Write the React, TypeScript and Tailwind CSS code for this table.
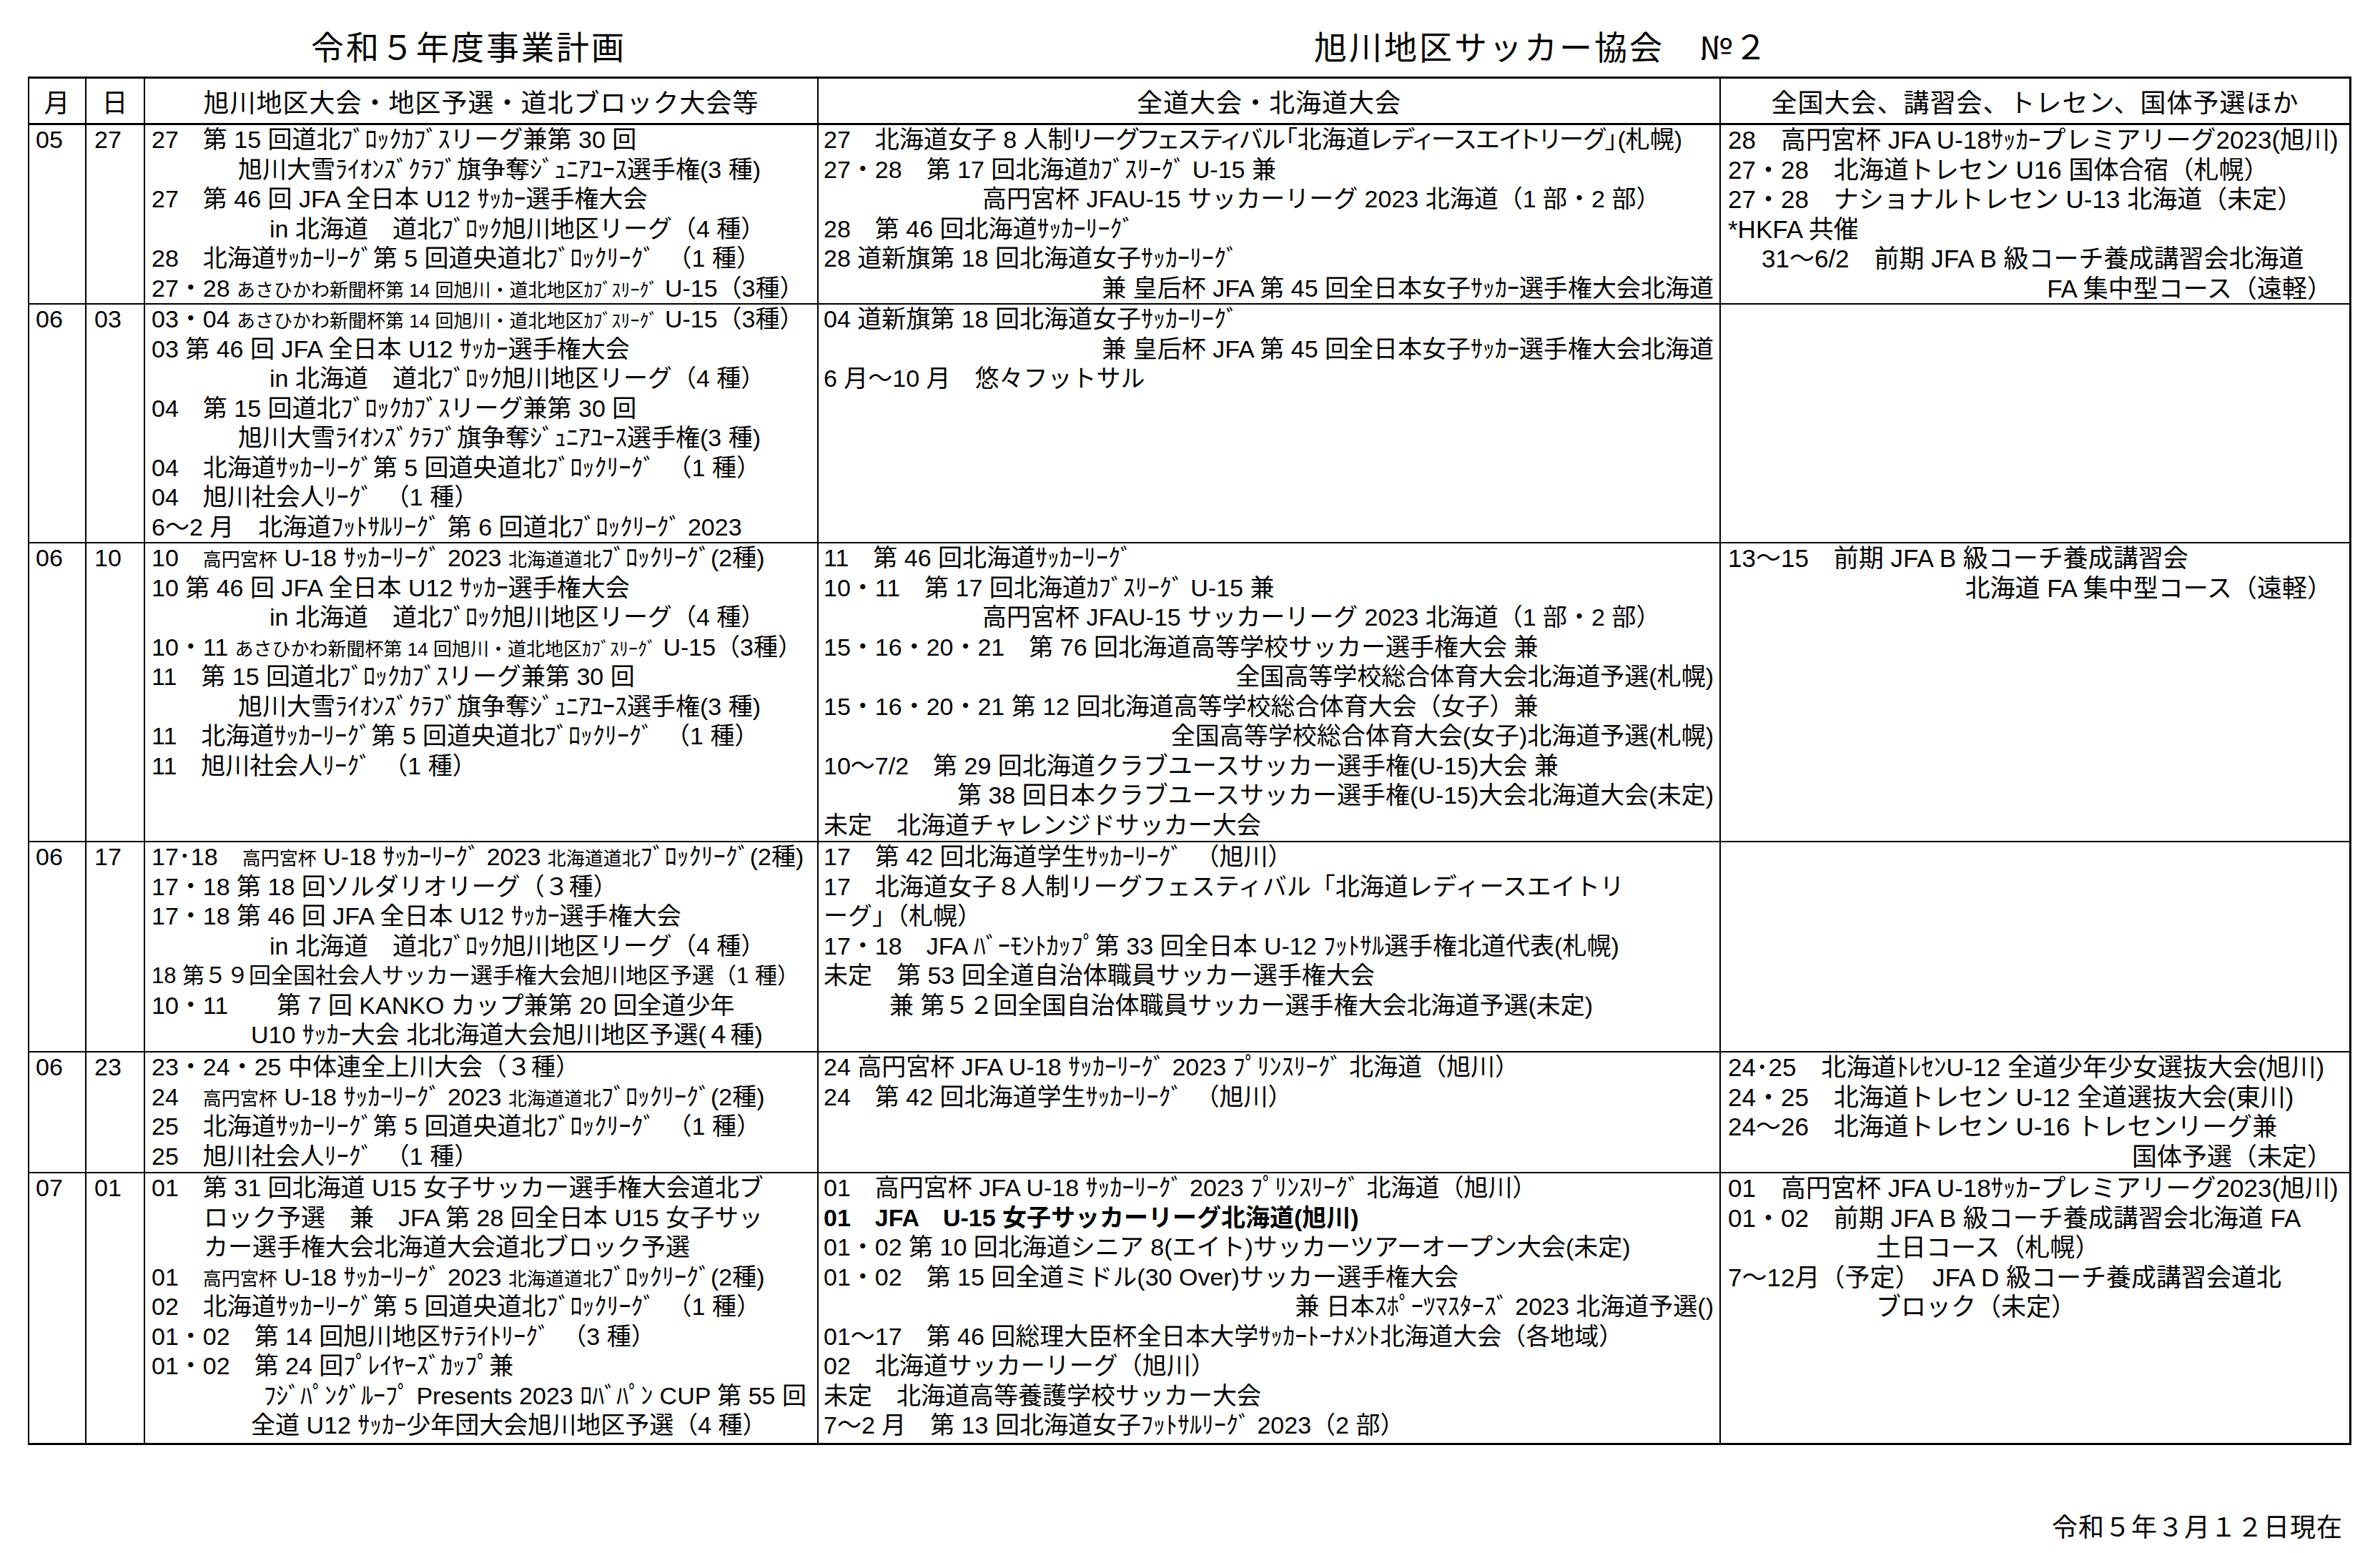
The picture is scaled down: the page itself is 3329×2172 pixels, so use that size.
import React from 'react';

type Ln = { t: React.ReactNode; c?: string };
type Row = { m: string; d: string; h: string; c1: Ln[]; c2: Ln[]; c3: Ln[] };

// Word-style gap between alphanumerics and Japanese text
const JA = '\u3040-\u30fa\u30fc-\u30ff\u4e00-\u9fff\uff66-\uff9f';
const jp = (s: string) =>
	s
		.replace(new RegExp(`([0-9A-Za-z])(?=[${JA}])`, 'g'), '$1 ')
		.replace(new RegExp(`([${JA}])(?=[0-9A-Za-z])`, 'g'), '$1 ');

// condensed pieces, as in the printed sheet
const S = ({ children }: { children: React.ReactNode }) => <span className="text-[26px]">{children}</span>;
const XS = ({ children }: { children: React.ReactNode }) => <span className="text-[26px]">{children}</span>;

const asahi = (day: string) => (
	<>
		{day} <XS>あさひかわ新聞杯第 14 回旭川・道北地区ｶﾌﾞｽﾘｰｸﾞ</XS> U-15（3種）
	</>
);
const takamado = (day: string) => (
	<>
		{day}
		<S>高円宮杯</S> U-18 ｻｯｶｰﾘｰｸﾞ 2023 <S>北海道道北</S>ﾌﾞﾛｯｸﾘｰｸﾞ(2種)
	</>
);

const rows: Row[] = [
	{
		m: '05',
		d: '27',
		h: 'h-[251px] border-b-2',
		c1: [
			{ t: '27　第15回道北ﾌﾞﾛｯｸｶﾌﾞｽリーグ兼第30回' },
			{ t: '旭川大雪ﾗｲｵﾝｽﾞｸﾗﾌﾞ旗争奪ｼﾞｭﾆｱﾕｰｽ選手権(3種)', c: 'pl-[121px]' },
			{ t: '27　第46回JFA全日本U12ｻｯｶｰ選手権大会' },
			{ t: 'in北海道　道北ﾌﾞﾛｯｸ旭川地区リーグ（4種）', c: 'pl-[165px]' },
			{ t: '28　北海道ｻｯｶｰﾘｰｸﾞ第5回道央道北ﾌﾞﾛｯｸﾘｰｸﾞ　（1種）' },
			{ t: asahi('27・28') },
		],
		c2: [
			{ t: '27　北海道女子8人制リーグフェスティバル「北海道レディースエイトリーグ」(札幌)', c: "[font-feature-settings:'palt']" },
			{ t: '27・28　第17回北海道ｶﾌﾞｽﾘｰｸﾞ U-15兼' },
			{ t: '高円宮杯JFAU-15サッカーリーグ2023北海道（1部・2部）', c: 'pl-[222px]' },
			{ t: '28　第46回北海道ｻｯｶｰﾘｰｸﾞ' },
			{ t: '28 道新旗第18回北海道女子ｻｯｶｰﾘｰｸﾞ' },
			{ t: '兼 皇后杯JFA第45回全日本女子ｻｯｶｰ選手権大会北海道', c: 'text-right' },
		],
		c3: [
			{ t: '28　高円宮杯 JFA U-18ｻｯｶｰプレミアリーグ2023(旭川)' },
			{ t: '27・28　北海道トレセン U16 国体合宿（札幌）' },
			{ t: '27・28　ナショナルトレセン U-13 北海道（未定）' },
			{ t: '*HKFA 共催' },
			{ t: '31～6/2　前期 JFA B 級コーチ養成講習会北海道', c: 'pl-[47px]' },
			{ t: 'FA 集中型コース（遠軽）', c: 'text-right' },
		],
	},
	{
		m: '06',
		d: '03',
		h: 'h-[334px] border-b-2',
		c1: [
			{ t: asahi('03・04') },
			{ t: '03 第46回JFA全日本U12ｻｯｶｰ選手権大会' },
			{ t: 'in北海道　道北ﾌﾞﾛｯｸ旭川地区リーグ（4種）', c: 'pl-[165px]' },
			{ t: '04　第15回道北ﾌﾞﾛｯｸｶﾌﾞｽリーグ兼第30回' },
			{ t: '旭川大雪ﾗｲｵﾝｽﾞｸﾗﾌﾞ旗争奪ｼﾞｭﾆｱﾕｰｽ選手権(3種)', c: 'pl-[121px]' },
			{ t: '04　北海道ｻｯｶｰﾘｰｸﾞ第5回道央道北ﾌﾞﾛｯｸﾘｰｸﾞ　（1種）' },
			{ t: '04　旭川社会人ﾘｰｸﾞ　（1種）' },
			{ t: '6～2月　北海道ﾌｯﾄｻﾙﾘｰｸﾞ 第6回道北ﾌﾞﾛｯｸﾘｰｸﾞ 2023' },
		],
		c2: [
			{ t: '04 道新旗第18回北海道女子ｻｯｶｰﾘｰｸﾞ' },
			{ t: '兼 皇后杯JFA第45回全日本女子ｻｯｶｰ選手権大会北海道', c: 'text-right' },
			{ t: '6月～10月　悠々フットサル' },
		],
		c3: [],
	},
	{
		m: '06',
		d: '10',
		h: 'h-[418px] border-b-2',
		c1: [
			{ t: takamado('10　') },
			{ t: '10 第46回JFA全日本U12ｻｯｶｰ選手権大会' },
			{ t: 'in北海道　道北ﾌﾞﾛｯｸ旭川地区リーグ（4種）', c: 'pl-[165px]' },
			{ t: asahi('10・11') },
			{ t: '11　第15回道北ﾌﾞﾛｯｸｶﾌﾞｽリーグ兼第30回' },
			{ t: '旭川大雪ﾗｲｵﾝｽﾞｸﾗﾌﾞ旗争奪ｼﾞｭﾆｱﾕｰｽ選手権(3種)', c: 'pl-[121px]' },
			{ t: '11　北海道ｻｯｶｰﾘｰｸﾞ第5回道央道北ﾌﾞﾛｯｸﾘｰｸﾞ　（1種）' },
			{ t: '11　旭川社会人ﾘｰｸﾞ　（1種）' },
		],
		c2: [
			{ t: '11　第46回北海道ｻｯｶｰﾘｰｸﾞ' },
			{ t: '10・11　第17回北海道ｶﾌﾞｽﾘｰｸﾞ U-15兼' },
			{ t: '高円宮杯JFAU-15サッカーリーグ2023北海道（1部・2部）', c: 'pl-[222px]' },
			{ t: '15・16・20・21　第76回北海道高等学校サッカー選手権大会 兼' },
			{ t: '全国高等学校総合体育大会北海道予選(札幌)', c: 'text-right' },
			{ t: '15・16・20・21 第12回北海道高等学校総合体育大会（女子）兼' },
			{ t: '全国高等学校総合体育大会(女子)北海道予選(札幌)', c: 'text-right' },
			{ t: '10～7/2　第29回北海道クラブユースサッカー選手権(U-15)大会 兼' },
			{ t: '第38回日本クラブユースサッカー選手権(U-15)大会北海道大会(未定)', c: 'text-right' },
			{ t: '未定　北海道チャレンジドサッカー大会' },
		],
		c3: [
			{ t: '13～15　前期 JFA B 級コーチ養成講習会' },
			{ t: '北海道 FA 集中型コース（遠軽）', c: 'text-right' },
		],
	},
	{
		m: '06',
		d: '17',
		h: 'h-[294px] border-b-2',
		c1: [
			{ t: takamado('17･18　') },
			{ t: '17・18 第18回ソルダリオリーグ（３種）' },
			{ t: '17・18 第46回JFA全日本U12ｻｯｶｰ選手権大会' },
			{ t: 'in北海道　道北ﾌﾞﾛｯｸ旭川地区リーグ（4種）', c: 'pl-[165px]' },
			{ t: '18 第５９回全国社会人サッカー選手権大会旭川地区予選（1種）', c: 'text-[31px]' },
			{ t: '10・11　　第7回KANKOカップ兼第20回全道少年' },
			{ t: 'U10ｻｯｶｰ大会 北北海道大会旭川地区予選(４種)', c: 'pl-[139px]' },
		],
		c2: [
			{ t: '17　第42回北海道学生ｻｯｶｰﾘｰｸﾞ　（旭川）' },
			{ t: '17　北海道女子８人制リーグフェスティバル「北海道レディースエイトリ' },
			{ t: 'ーグ」（札幌）' },
			{ t: '17・18　JFAﾊﾞｰﾓﾝﾄｶｯﾌﾟ第33回全日本U-12ﾌｯﾄｻﾙ選手権北道代表(札幌)' },
			{ t: '未定　第53回全道自治体職員サッカー選手権大会' },
			{ t: '兼 第５２回全国自治体職員サッカー選手権大会北海道予選(未定)', c: 'pl-[92px]' },
		],
		c3: [],
	},
	{
		m: '06',
		d: '23',
		h: 'h-[169px] border-b-2',
		c1: [
			{ t: '23・24・25 中体連全上川大会（３種）' },
			{ t: takamado('24　') },
			{ t: '25　北海道ｻｯｶｰﾘｰｸﾞ第5回道央道北ﾌﾞﾛｯｸﾘｰｸﾞ　（1種）' },
			{ t: '25　旭川社会人ﾘｰｸﾞ　（1種）' },
		],
		c2: [
			{ t: '24 高円宮杯JFA U-18ｻｯｶｰﾘｰｸﾞ 2023 ﾌﾟﾘﾝｽﾘｰｸﾞ 北海道（旭川）' },
			{ t: '24　第42回北海道学生ｻｯｶｰﾘｰｸﾞ　（旭川）' },
		],
		c3: [
			{ t: '24･25　北海道ﾄﾚｾﾝU-12 全道少年少女選抜大会(旭川)' },
			{ t: '24・25　北海道トレセン U-12 全道選抜大会(東川)' },
			{ t: '24～26　北海道トレセン U-16 トレセンリーグ兼' },
			{ t: '国体予選（未定）', c: 'text-right' },
		],
	},
	{
		m: '07',
		d: '01',
		h: 'h-[377px]',
		c1: [
			{ t: '01　第31回北海道U15女子サッカー選手権大会道北ブ' },
			{ t: 'ロック予選　兼　JFA第28回全日本U15女子サッ', c: 'pl-[73px]' },
			{ t: 'カー選手権大会北海道大会道北ブロック予選', c: 'pl-[73px]' },
			{ t: takamado('01　') },
			{ t: '02　北海道ｻｯｶｰﾘｰｸﾞ第5回道央道北ﾌﾞﾛｯｸﾘｰｸﾞ　（1種）' },
			{ t: '01・02　第14回旭川地区ｻﾃﾗｲﾄﾘｰｸﾞ　（3種）' },
			{ t: '01・02　第24回ﾌﾟﾚｲﾔｰｽﾞｶｯﾌﾟ兼' },
			{ t: 'ﾌｼﾞﾊﾟﾝｸﾞﾙｰﾌﾟ Presents 2023 ﾛﾊﾞﾊﾟﾝ CUP 第55回', c: 'pl-[157px]' },
			{ t: '全道U12ｻｯｶｰ少年団大会旭川地区予選（4種）', c: 'pl-[139px]' },
		],
		c2: [
			{ t: '01　高円宮杯JFA U-18ｻｯｶｰﾘｰｸﾞ 2023 ﾌﾟﾘﾝｽﾘｰｸﾞ 北海道（旭川）' },
			{ t: '01　JFA　U-15女子サッカーリーグ北海道(旭川)', c: 'font-bold' },
			{ t: '01・02 第10回北海道シニア8(エイト)サッカーツアーオープン大会(未定)' },
			{ t: '01・02　第15回全道ミドル(30 Over)サッカー選手権大会' },
			{ t: '兼 日本ｽﾎﾟｰﾂﾏｽﾀｰｽﾞ 2023 北海道予選()', c: 'text-right' },
			{ t: '01～17　第46回総理大臣杯全日本大学ｻｯｶｰﾄｰﾅﾒﾝﾄ北海道大会（各地域）' },
			{ t: '02　北海道サッカーリーグ（旭川）' },
			{ t: '未定　北海道高等養護学校サッカー大会' },
			{ t: '7～2月　第13回北海道女子ﾌｯﾄｻﾙﾘｰｸﾞ 2023（2部）' },
		],
		c3: [
			{ t: '01　高円宮杯 JFA U-18ｻｯｶｰプレミアリーグ2023(旭川)' },
			{ t: '01・02　前期 JFA B 級コーチ養成講習会北海道 FA' },
			{ t: '土日コース（札幌）', c: 'pl-[207px]' },
			{ t: '7～12月（予定）　JFA D 級コーチ養成講習会道北' },
			{ t: 'ブロック（未定）', c: 'pl-[207px]' },
		],
	},
];

function Lines({ lines, spaced }: { lines: Ln[]; spaced?: boolean }) {
	return (
		<>
			{lines.map((l, i) => (
				<div key={i} className={'h-[41.5px] leading-[41.5px] whitespace-nowrap ' + (l.c ?? '')}>
					{spaced && typeof l.t === 'string' ? jp(l.t) : l.t}
				</div>
			))}
		</>
	);
}

export default function App() {
	return (
		<div className="w-[3329px] h-[2172px] bg-white text-black overflow-hidden font-[family-name:Noto_Sans_CJK_JP,sans-serif]">
			{/* Title */}
			<div className="flex h-[107px] pt-[40px] text-[46px] leading-[46px] tracking-[3px]">
				<div className="w-[1838px] pl-[435px]">令和５年度事業計画</div>
				<div>旭川地区サッカー協会　№２</div>
			</div>

			{/* Schedule table */}
			<div className="ml-[39px] w-[3250px] border-l-2 border-r-[3px] border-t-[3px] border-b-[3px] border-black">
				<div className="grid grid-cols-[80px_82px_942px_1262px_1fr] h-[65px] border-b-[3px] border-black text-[36px] tracking-[1px]">
					<div className="flex items-center justify-center border-r-2 border-black">月</div>
					<div className="flex items-center justify-center border-r-2 border-black">日</div>
					<div className="flex items-center justify-center border-r-2 border-black">旭川地区大会・地区予選・道北ブロック大会等</div>
					<div className="flex items-center justify-center border-r-2 border-black">全道大会・北海道大会</div>
					<div className="flex items-center justify-center">全国大会、講習会、トレセン、国体予選ほか</div>
				</div>

				{rows.map((r, i) => (
					<div key={i} className={'grid grid-cols-[80px_82px_942px_1262px_1fr] border-black ' + r.h}>
						<div className="border-r-2 border-black pl-[9px] text-[34px] leading-[41.5px] font-[family-name:Liberation_Sans_Narrow,Liberation_Sans,sans-serif]">
							{r.m}
						</div>
						<div className="border-r-2 border-black pl-[11px] text-[34px] leading-[41.5px] font-[family-name:Liberation_Sans_Narrow,Liberation_Sans,sans-serif]">
							{r.d}
						</div>
						<div className="border-r-2 border-black pl-[9px] pr-[6px] text-[34px] overflow-hidden font-[family-name:Liberation_Sans_Narrow,Liberation_Sans,Noto_Sans_CJK_JP,sans-serif]">
							<Lines lines={r.c1} spaced />
						</div>
						<div className="border-r-2 border-black pl-[7px] pr-[8px] text-[34px] overflow-hidden font-[family-name:Liberation_Sans_Narrow,Liberation_Sans,Noto_Sans_CJK_JP,sans-serif]">
							<Lines lines={r.c2} spaced />
						</div>
						<div className="pl-[10px] pr-[24px] text-[35px] overflow-hidden font-[family-name:Liberation_Sans,Noto_Sans_CJK_JP,sans-serif]">
							<Lines lines={r.c3} />
						</div>
					</div>
				))}
			</div>

			{/* Date stamp */}
			<div className="mt-[94px] pr-[52px] text-right text-[36px] leading-[36px] tracking-[1px]">令和５年３月１２日現在</div>
		</div>
	);
}
